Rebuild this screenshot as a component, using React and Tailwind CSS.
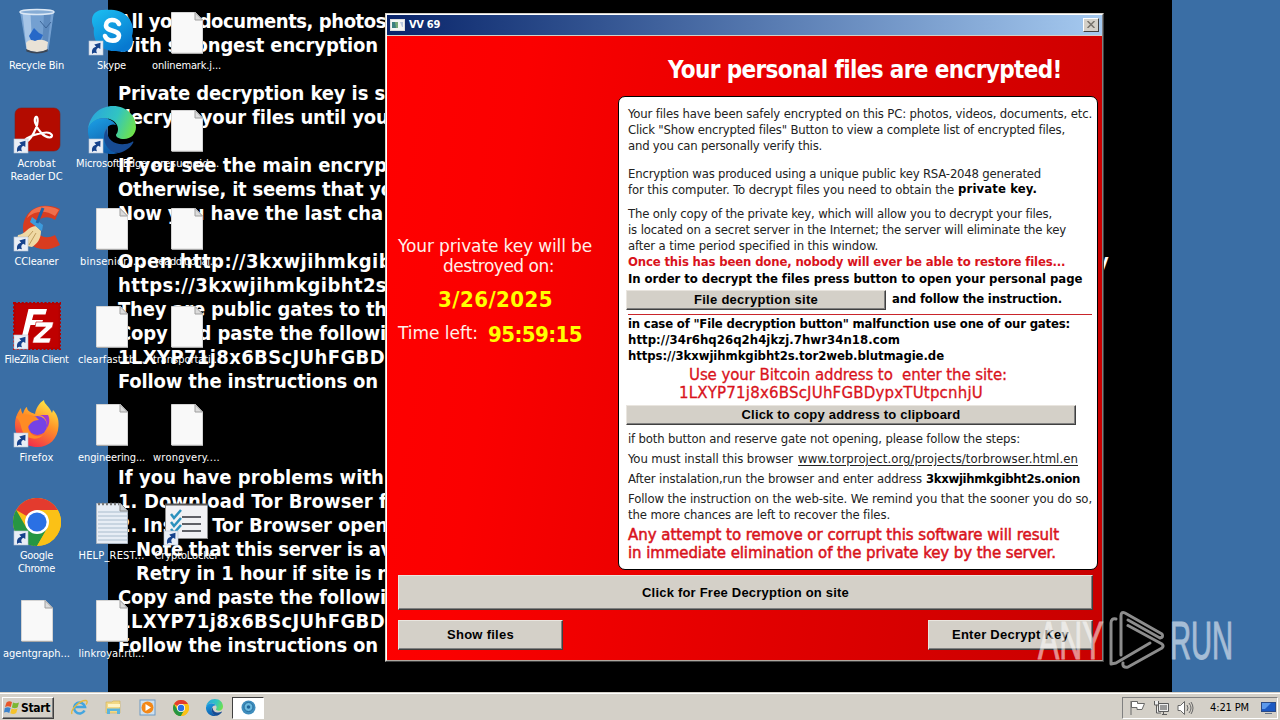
import React, { useLayoutEffect, useRef, useState } from "react";

const TAHOMA = "font-['DejaVu_Sans_Condensed','DejaVu_Sans','Noto_Sans',sans-serif] [font-stretch:condensed]";
const VERDANA = "font-['DejaVu_Sans',sans-serif] [font-stretch:normal]";
const ARIAL = "font-['Liberation_Sans',sans-serif]";

/* One line of text whose letter spacing is tuned to fill a width. */
function Fit({ w, children, className = "" }) {
  const ref = useRef(null);
  const [gap, setGap] = useState(0);
  useLayoutEffect(() => {
    const natural = ref.current.getBoundingClientRect().width;
    setGap((w - natural) / children.length);
  }, [w, children]);
  return (
    <span ref={ref} className={`inline-block whitespace-pre ${className}`} style={{ letterSpacing: gap }}>
      {children}
    </span>
  );
}

const wallpaper = [
  ["All your documents, photos", 268],
  ["with strongest encryption", 260],
  null,
  ["Private decryption key is s", 267],
  ["decrypt your files until you", 270],
  null,
  ["If you see the main encryp", 269],
  ["Otherwise, it seems that yo", 275],
  ["Now you have the last cha", 265],
  null,
  ["Open http://3kxwjihmkgib", 274],
  ["https://3kxwjihmkgibht2s", 269],
  ["They are public gates to th", 269],
  ["Copy and paste the followi", 268],
  ["1LXYP71j8x6BScJUhFGBD", 267],
  ["Follow the instructions on", 260],
  null,
  null,
  null,
  ["If you have problems with", 266],
  ["1. Download Tor Browser f", 269],
  ["2. Install Tor Browser open", 270],
  ["Note that this server is av", 256, true],
  ["Retry in 1 hour if site is n", 254, true],
  ["Copy and paste the followi", 268],
  ["1LXYP71j8x6BScJUhFGBD", 267],
  ["Follow the instructions on", 260],
];

function Shortcut({ x = 1, y = 33 }) {
  return (
    <g transform={`translate(${x} ${y})`}>
      <rect width="14" height="14" fill="#e9eef6" stroke="#b9c4d4" strokeWidth=".6" />
      <path d="M3.2 13c-1-4.500 1.300-7 4-7.300L5.300 3.500 11.500 1.800 11.300 8 9.300 6.800C7 8 6.800 10 8 12.300 6 11.500 4.500 11.500 3.200 13Z" fill="#17438c" />
    </g>
  );
}

function FileIcon() {
  return (
    <svg width="48" height="48" viewBox="0 0 48 48">
      <path d="M8.500 4.500h24l7 7.500v33H8.500Z" fill="#f9f9f9" stroke="#d4d4d4" />
      <path d="M32 4.500v7.500h7.500Z" fill="#dcdcdc" stroke="#9f9f9f" />
      <path d="M9 45.500h31" stroke="#a8a8a8" />
    </svg>
  );
}

function NoteIcon() {
  return (
    <svg width="48" height="48" viewBox="0 0 48 48">
      <path d="M8.500 5.500h24l7 7v33H8.500Z" fill="#e7edf5" stroke="#a9b3bf" />
      <path d="M10 14h29M10 18h29M10 22h29M10 26h29M10 30h29M10 34h29M10 38h29M10 42h29" stroke="#a9bccd" />
      <path d="M10 6h21" stroke="#777" strokeWidth="2.500" strokeDasharray="2 2" />
      <path d="M32 5v8h8Z" fill="#c8cdd2" stroke="#888" />
    </svg>
  );
}

function RecycleIcon() {
  return (
    <svg width="48" height="48" viewBox="0 0 48 48">
      <path d="M7 3.500h34L35.500 42q-11 5-22 0Z" fill="#7fa9d8" opacity=".85" />
      <path d="M9.500 6h8l2 36-6-1Z" fill="#b7d2ee" opacity=".75" />
      <path d="M31 6l7 0-4 35-5 1Z" fill="#5884b9" opacity=".8" />
      <path d="M16 28l5-8 5 5 4 2-3 6-8 1Z" fill="#2768c8" />
      <path d="M13 35q3-5 9-2 6-3 13 1l-1 8q-10 4-20 0Z" fill="#e9e2d6" />
      <path d="M13 41q11 6 22 0l-.5 2.500q-11 4-21 0Z" fill="#3c4654" />
      <ellipse cx="24" cy="4" rx="17" ry="2.500" fill="#86acd5" stroke="#dce8f5" strokeWidth="1.500" />
      <path d="M27 13l6 7 5-6" fill="none" stroke="#3d6699" />
    </svg>
  );
}

function AcrobatIcon() {
  return (
    <svg width="48" height="48" viewBox="0 0 48 48">
      <rect x="2" y="2" width="45" height="43" rx="6" fill="#b30b00" stroke="#852018" strokeWidth=".6" />
      <path d="M12 36C17 36 26 20 24.500 12.500 23.500 8.500 20.500 12 22.500 17.500 25 25 31 31 36.500 31.500 41 31 39 26.500 33.500 26.500 26 26.500 15 31 12.500 33.500 11 35.500 11.500 36 12 36Z" fill="none" stroke="#fff" strokeWidth="2.200" />
      <Shortcut />
    </svg>
  );
}

function CCleanerIcon() {
  return (
    <svg width="48" height="48" viewBox="0 0 48 48">
      <path d="M47 5C30-3 11 4 10 24c0 18 19 27 37 17l-5-10c-9 5-19 1-19-8 0-8 10-13 19-7Z" fill="#d83c20" />
      <path d="M46 6C33-1 18 2 14 14c8-8 19-8 28-2Z" fill="#ef6f4c" />
      <path d="M5 31c7 0 10-9 18-9l5 5c0 8-4 13-9 16L3 40Z" fill="#efd9a4" />
      <path d="M10 39l10-12M16 41l7-12" stroke="#bd9b5d" />
      <path d="M17 18l12 9 1-6-11-8Z" fill="#3d9bdc" />
      <path d="M24 19l6-15" stroke="#1e63a9" strokeWidth="3" />
      <Shortcut />
    </svg>
  );
}

function FileZillaIcon() {
  return (
    <svg width="48" height="48" viewBox="0 0 48 48">
      <rect x="1" y="1" width="46" height="46" fill="#b30000" stroke="#b30000" strokeWidth="2" strokeDasharray="2.200 1.600" />
      <rect x="2.500" y="2.500" width="43" height="43" fill="#bf0000" />
      <path d="M15.500 7H34l-1.500 5.500H20.500l-1.500 5.500h11l-1.500 5H17.500L14.500 34H9Z" fill="#fff" />
      <path d="M23 20h17.500l-1 5L27.500 36H38l-1.500 5H19.500l1-5L32.500 25H22Z" fill="#fff" stroke="#bf0000" strokeWidth=".6" />
      <Shortcut />
    </svg>
  );
}

function FirefoxIcon() {
  return (
    <svg width="48" height="48" viewBox="0 0 48 48">
      <defs>
        <linearGradient id="fx" x1=".8" y1="0" x2=".3" y2="1">
          <stop offset="0" stopColor="#fff04a" />
          <stop offset=".45" stopColor="#ff9428" />
          <stop offset="1" stopColor="#f0284d" />
        </linearGradient>
      </defs>
      <path d="M31 0c0 4 6 7 8 13l1-3c4 4 6 9 5.500 16C45 39 36 47 24.500 47 11 47 2 38 2 25c0-8 3-13 6-17 0 3 1 5 2 6 1-4 3-7 4-7 0 4 3 5 8 7 1-6 4-11 9-14Z" fill="url(#fx)" />
      <circle cx="24.500" cy="25.500" r="9.500" fill="#7542e5" />
      <path d="M3 17c6-5 16-2 20 0l3 3c-7 0-9 4-11 7 1 8 8 11 15 8-4 5-14 5-19-1C7 28 9 22 3 17Z" fill="#ff8b24" />
      <path d="M25 15c7 0 11 8 8 14 4-4 4-10 2-14Z" fill="#a13ad0" />
      <Shortcut />
    </svg>
  );
}

function ChromeMark({ size = 48, link = false }) {
  return (
    <svg width={size} height={size} viewBox="0 0 48 48">
      <circle cx="24" cy="24" r="24" fill="#fbc116" />
      <path d="M24 24 3.200 12A24 24 0 0 1 44.800 12H24Z" fill="#e33b2e" />
      <path d="M3.200 12 13.600 30 24 36 21 47.800A24 24 0 0 1 3.200 12Z" fill="#269643" />
      <path d="M13.600 30 24 36 34.400 30 24 48l-3-.2A24 24 0 0 1 8 42Z" fill="#269643" />
      <path d="M44.800 12A24 24 0 0 1 24 48L34.400 30 36 18 24 12Z" fill="#fbc116" />
      <circle cx="24" cy="24" r="12" fill="#fff" />
      <circle cx="24" cy="24" r="9.600" fill="#2b70e4" />
      {link && <Shortcut />}
    </svg>
  );
}

function EdgeMark({ size = 48, link = false, id }) {
  return (
    <svg width={size} height={size} viewBox="0 0 48 48">
      <defs>
        <linearGradient id={`${id}a`} x1="0" y1=".3" x2="1" y2=".6">
          <stop offset="0" stopColor="#2aa5dd" />
          <stop offset=".55" stopColor="#31c4c2" />
          <stop offset="1" stopColor="#6ee24c" />
        </linearGradient>
        <linearGradient id={`${id}b`} x1=".2" y1="0" x2=".6" y2="1">
          <stop offset="0" stopColor="#1b9de2" />
          <stop offset="1" stopColor="#0f5aa8" />
        </linearGradient>
      </defs>
      <path d="M0 23C2 9 12 0 25 0c14 0 23 10 23 21 0 7-5 12-12 12-5 0-8-2-8-4 0-1 2-2 2-6 0-6-6-11-14-11C9 12 3 16 0 23Z" fill={`url(#${id}a)`} />
      <path d="M0 23C4 10 22 9 28 19c-5-2-12 2-12 11 0 7 5 15 14 17-2 .8-4 1-6 1C10 48-1 37 0 23Z" fill={`url(#${id}b)`} />
      <path d="M19 23c-7 8-1 24 12 24 7-2 12-6 14-10 1-1 0-2-1-1-10 5-26 2-25-13Z" fill="#174b93" />
      {link && <Shortcut />}
    </svg>
  );
}

function SkypeIcon() {
  return (
    <svg width="48" height="48" viewBox="0 0 48 48">
      <defs>
        <linearGradient id="sk" x1="0" y1="0" x2=".6" y2="1">
          <stop offset="0" stopColor="#1cc0f2" />
          <stop offset="1" stopColor="#0779d0" />
        </linearGradient>
      </defs>
      <path d="M15 2C24 1 34 2 40 9c5 6 6 13 4 19 3 8-2 16-9 16-3 0-5-1-7-1C14 44 4 34 6 20 1 10 6 2 15 2Z" fill="url(#sk)" />
      <path d="M31 16C29 10.500 18 10.500 18 17.500c0 6.500 13 4 13 10.300C31 34.500 19 34 17 28" fill="none" stroke="#fff" strokeWidth="4.600" strokeLinecap="round" />
      <Shortcut />
    </svg>
  );
}

function LockerIcon() {
  return (
    <svg width="48" height="48" viewBox="0 0 48 48">
      <rect x="2.500" y="6.500" width="42" height="34" fill="#f1f1f4" stroke="#8a8a8a" />
      <path d="M2 6.500h43" stroke="#555" strokeWidth="2" />
      <path d="M19 19h19M19 26h19M19 33h19" stroke="#5f6066" strokeWidth="2" />
      <path d="m8 16 3 4 7-8M8 24l3 4 7-8M8 31l3 4 7-8" fill="none" stroke="#2b91bd" strokeWidth="2.500" />
      <Shortcut />
    </svg>
  );
}

const desktop = [
  [<RecycleIcon />, ["Recycle Bin", 55]],
  [<SkypeIcon />, ["Skype", 29]],
  [<FileIcon />, ["onlinemark.j...", 69]],
  [<AcrobatIcon />, ["Acrobat", 38], ["Reader DC", 52]],
  [<EdgeMark id="desk" size={48} link />, ["Microsoft Edge", 71]],
  [<FileIcon />, ["presumoid...", 66]],
  [<CCleanerIcon />, ["CCleaner", 44]],
  [<FileIcon />, ["binsenior.j...", 63]],
  [<FileIcon />, ["readditional...", 63]],
  [<FileZillaIcon />, ["FileZilla Client", 64]],
  [<FileIcon />, ["clearfast.tb...", 67]],
  [<FileIcon />, ["transportati...", 67]],
  [<FirefoxIcon />, ["Firefox", 34]],
  [<FileIcon />, ["engineering...", 67]],
  [<FileIcon />, ["wrongvery....", 67]],
  [<ChromeMark link />, ["Google", 33], ["Chrome", 37]],
  [<NoteIcon />, ["HELP_REST...", 66]],
  [<LockerIcon />, ["CryptoLocker", 64]],
  [<FileIcon />, ["agentgraph...", 67]],
  [<FileIcon />, ["linkroyal.rtf...", 66]],
];

function Button({ className = "", children, w }) {
  return (
    <button className={`flex shrink-0 items-center justify-center border border-t-[#e9e5df] border-l-[#e9e5df] border-b-[#404040] border-r-[#404040] bg-[#d4d0c8] text-[13px] font-bold text-black shadow-[inset_-1px_-1px_0_#808080] ${ARIAL} ${className}`}>
      <Fit w={w}>{children}</Fit>
    </button>
  );
}

function Row({ w, className = "", h = "h-4" }) {
  return (
    <div className={`flex items-center ${h} ${className}`}>
      <Fit w={w[1]}>{w[0]}</Fit>
    </div>
  );
}

function Panel() {
  return (
    <section className="ml-[231px] h-[475px] w-[480px] rounded-[7px] border border-black bg-white pt-[9px] pl-[9px] text-[13px] leading-4 text-[#222]">
      <Row w={["Your files have been safely encrypted on this PC: photos, videos, documents, etc.", 464]} />
      <Row w={['Click "Show encrypted files" Button to view a complete list of encrypted files,', 437]} />
      <Row w={["and you can personally verify this.", 194]} />
      <Row className="mt-3" w={["Encryption was produced using a unique public key RSA-2048 generated", 413]} />
      <div className="flex h-4 items-center gap-1">
        <Fit w={326}>for this computer. To decrypt files you need to obtain the</Fit>
        <Fit w={79} className="pb-px font-bold text-black">private key.</Fit>
      </div>
      <Row className="mt-2" w={["The only copy of the private key, which will allow you to decrypt your files,", 424]} />
      <Row w={["is located on a secret server in the Internet; the server will eliminate the key", 438]} />
      <Row w={["after a time period specified in this window.", 250]} />
      <Row className="font-bold text-[#d9131c]" w={["Once this has been done, nobody will ever be able to restore files...", 437]} />
      <Row h="h-[17px]" className="pt-px font-bold text-black" w={["In order to decrypt the files press button to open your personal page", 454]} />
      <div className="mt-[3px] -ml-[2px] flex h-5 items-center gap-[6px]">
        <Button className="h-5 w-[260px]" w={124}>File decryption site</Button>
        <Fit w={170} className="pb-[2px] font-bold text-black">and follow the instruction.</Fit>
      </div>
      <div className="mt-1 h-px w-[464px] bg-[#c9252b]" />
      <Row className="mt-px font-bold text-black" w={['in case of "File decryption button" malfunction use one of our gates:', 442]} />
      <Row className="font-bold text-black" w={["http://34r6hq26q2h4jkzj.7hwr34n18.com", 272]} />
      <Row className="font-bold text-black" w={["https://3kxwjihmkgibht2s.tor2web.blutmagie.de", 316]} />
      <div className={`mt-[2px] text-[15px] text-[#d9131c] [-webkit-text-stroke:0.3px_#d9131c] ${VERDANA}`}>
        <Row h="h-[18px]" className="pl-[61px]" w={["Use your Bitcoin address to  enter the site:", 318]} />
        <Row h="h-[18px]" className="pl-[51px]" w={["1LXYP71j8x6BScJUhFGBDypxTUtpcnhjU", 304]} />
      </div>
      <Button className="mt-[3px] -ml-[2px] h-5 w-[450px]" w={219}>Click to copy address to clipboard</Button>
      <Row h="h-5" className="mt-1" w={["if both button and reserve gate not opening, please follow the steps:", 392]} />
      <div className="flex h-5 items-center gap-[5px]">
        <Fit w={165}>You must install this browser</Fit>
        <Fit w={280} className="underline underline-offset-2">www.torproject.org/projects/torbrowser.html.en</Fit>
      </div>
      <div className="flex h-5 items-center gap-1">
        <Fit w={294}>After instalation,run the browser and enter address</Fit>
        <Fit w={154} className="font-bold text-black">3kxwjihmkgibht2s.onion</Fit>
      </div>
      <Row className="mt-[2px]" w={["Follow the instruction on the web-site. We remind you that the sooner you do so,", 464]} />
      <Row w={["the more chances are left to recover the files.", 262]} />
      <div className={`mt-[3px] text-[15px] text-[#d9131c] [-webkit-text-stroke:0.5px_#d9131c] ${VERDANA}`}>
        <Row h="h-[18px]" w={["Any attempt to remove or corrupt this software will result", 431]} />
        <Row h="h-[18px]" w={["in immediate elimination of the private key by the server.", 428]} />
      </div>
    </section>
  );
}

function LockerWindow() {
  return (
    <main className="absolute top-[13px] left-[385px] flex h-[649px] w-[719px] flex-col border border-t-[#d4d0c8] border-r-[#404040] border-b-[#404040] border-l-[#d4d0c8] bg-[#d4d0c8]">
      <div className="flex h-full flex-col border border-t-white border-r-[#808080] border-b-[#b0a8a0] border-l-white">
        <header className="flex h-[20px] shrink-0 items-center justify-between bg-linear-to-r from-[#0a246a] to-[#a6caf0] pr-[3px] pl-[3px]">
          <div className="flex items-center gap-1">
            <svg width="15" height="12" viewBox="0 0 15 12">
              <rect x=".5" y=".5" width="14" height="11" fill="#f5f5f5" stroke="#ddd" />
              <path d="M2 3h6v6H2Z" fill="#3d7f80" />
              <path d="M5 3h3v6H6Z" fill="#78a978" />
              <path d="M10 3h3v5h-1Z" fill="#bcc9df" />
            </svg>
            <Fit w={31} className="text-[11px] font-bold text-white">VV 69</Fit>
          </div>
          <div className="mt-[-1px] flex h-[14px] w-4 items-center justify-center border border-t-white border-r-[#404040] border-b-[#404040] border-l-white bg-[#d4d0c8]">
            <svg width="8" height="7" viewBox="0 0 8 7">
              <path d="m.5 0 7 7m0-7-7 7" stroke="#77736c" strokeWidth="1.500" />
            </svg>
          </div>
        </header>
        <div className="flex min-h-0 flex-1 flex-col border-t border-[#d4d0c8] bg-linear-[98deg,#ff0000_0%,#fb0000_18%,#e00000_60%,#c80000_100%]">
          <div className="relative flex h-[534px] shrink-0 flex-col">
            <h1 className="ml-[281px] flex h-[60px] items-center pt-[9px] text-[24px] leading-none font-bold text-white">
              <Fit w={393}>Your personal files are encrypted!</Fit>
            </h1>
            <Panel />
            <aside className={`absolute top-[201px] left-[11px] flex w-[200px] flex-col text-[17px] text-[#fff0ea] ${VERDANA}`}>
              <Row h="h-5" w={["Your private key will be", 194]} />
              <Row h="h-5" className="pl-[45px]" w={["destroyed on:", 111]} />
              <div className={TAHOMA}>
                <Row h="h-[34px]" className="mt-[5px] pl-[40px] text-[22px] font-bold text-[#ffff00]" w={["3/26/2025", 115]} />
              </div>
              <div className="flex h-9 items-center gap-[10px]">
                <Fit w={80}>Time left:</Fit>
                <Fit w={94} className={`text-[22px] font-bold text-[#ffff00] ${TAHOMA}`}>95:59:15</Fit>
              </div>
            </aside>
          </div>
          <div className="mt-[5px] flex flex-col gap-[10px] pl-[11px]">
            <Button className="h-[35px] w-[695px]" w={207}>Click for Free Decryption on site</Button>
            <div className="flex w-[695px] justify-between">
              <Button className="h-[30px] w-[165px]" w={67}>Show files</Button>
              <Button className="h-[30px] w-[165px]" w={117}>Enter Decrypt Key</Button>
            </div>
          </div>
        </div>
      </div>
    </main>
  );
}

function Watermark() {
  return (
    <div className="absolute top-[608px] left-[1038px] flex h-16 items-center text-white opacity-55">
      <div className="w-[70px]">
        <div className={`w-max origin-left scale-x-[0.59] text-[54px] leading-none [-webkit-text-stroke:1px_white] ${ARIAL}`}>ANY</div>
      </div>
      <svg width="58" height="64" viewBox="0 0 58 64" fill="none" stroke="currentColor" strokeWidth="3" strokeLinejoin="round" strokeLinecap="round">
        <path d="M13 47V8q0-5 4-3l37 21q2 3-2 4L20 12" />
        <path d="M8 11q-5-1-5 4v41l5-1 34-20" />
        <path d="M20 17.500 54 36q2 2 0 4L20 59q-6 1-5-4" />
      </svg>
      <div className="ml-[4px] w-[66px]">
        <div className={`w-max origin-left scale-x-[0.54] text-[54px] leading-none [-webkit-text-stroke:1px_white] ${ARIAL}`}>RUN</div>
      </div>
    </div>
  );
}

function Taskbar() {
  return (
    <footer className="absolute bottom-0 left-0 flex h-7 w-full items-center justify-between border-t border-[#d4d0c8] bg-[#d4d0c8] shadow-[inset_0_1px_0_#fff]">
      <div className="flex items-center pt-[2px] pl-[2px]">
        <button className="flex h-[22px] w-[52px] items-center gap-px border border-t-white border-r-[#404040] border-b-[#404040] border-l-white pl-px shadow-[inset_-1px_-1px_0_#808080]">
          <svg width="16" height="15" viewBox="0 0 16 15">
            <path d="M2.500 2.500Q5 .5 8 2L6.800 7Q4 5.500 1 7Z" fill="#e8562a" />
            <path d="M9 2.500q3 1.500 6 0L13.700 7.300Q11 9 7.900 7.500Z" fill="#7cb733" />
            <path d="M.8 8q3-1.500 5.800 0L5.300 13Q2.500 11.300 0 12.500Z" fill="#3d83cc" />
            <path d="M7.600 8.500q3 1.500 6 0L12.200 13Q9.500 15 6.300 13.300Z" fill="#f5c22b" />
          </svg>
          <Fit w={29} className="text-[12px] font-bold text-black">Start</Fit>
        </button>
        <div className="ml-[17px] flex items-center gap-[17px]">
          <svg width="17" height="17" viewBox="0 0 17 17">
            <path d="M13.500 11.500A5.500 5.500 0 1 1 14 8H4" fill="none" stroke="#43a5df" strokeWidth="2.600" />
            <path d="M1 15C-1 11 9 1 15 1.500c2 .5 1 3 0 4" fill="none" stroke="#e6b93c" strokeWidth="1.300" />
          </svg>
          <svg width="17" height="17" viewBox="0 0 17 17">
            <path d="M1 3h6l1-1h7v12H1Z" fill="#f2d885" stroke="#cfae55" strokeWidth=".6" />
            <path d="M3 5h12v3H3Z" fill="#fff4c6" />
            <path d="M2 15V9.500h13V15h-3v-3H5v3Z" fill="#5cb4dc" />
          </svg>
          <svg width="17" height="17" viewBox="0 0 17 17">
            <rect x="1" y="1" width="15" height="15" fill="#cfe0ee" stroke="#6c9ac4" />
            <circle cx="8.500" cy="8.500" r="6" fill="#f38818" />
            <path d="M6.500 5v7l5.500-3.500Z" fill="#fff" />
          </svg>
          <ChromeMark size={16} />
          <EdgeMark id="bar" size={17} />
        </div>
        <div className="ml-[9px] flex h-[22px] w-8 items-center justify-center border border-t-[#404040] border-r-white border-b-white border-l-[#404040] bg-white">
          <svg width="15" height="15" viewBox="0 0 15 15">
            <circle cx="7.500" cy="7.500" r="7" fill="#3f8dbd" />
            <circle cx="7.500" cy="7" r="4.500" fill="#6bb9de" stroke="#236a9b" />
            <circle cx="7.500" cy="7" r="1.800" fill="#1e649a" />
          </svg>
        </div>
      </div>
      <div className="mt-[3px] mr-[2px] flex h-[22px] w-[156px] items-center border border-t-[#808080] border-r-white border-b-white border-l-[#808080] pl-[6px]">
        <svg width="17" height="16" viewBox="0 0 17 16" fill="#fff" stroke="#686868">
          <path d="M2 15V1M2.500 1.500h6v2h7L13 9.500H8v-2H2.500Z" />
        </svg>
        <svg className="ml-[7px]" width="17" height="16" viewBox="0 0 17 16" fill="#eee" stroke="#5c5c5c">
          <path d="M5.500 3.500h10v8h-10ZM9 14.500h5M10.500 12v2M1.500 1v4h4V1M3.500 5v8H8" />
          <path d="M7 5h7v5H7Z" fill="#999" stroke="none" />
        </svg>
        <svg className="ml-[7px]" width="17" height="16" viewBox="0 0 17 16" fill="#fff" stroke="#666">
          <path d="M1 5.500h2.500l4-4v13l-4-4H1Z" />
          <path d="M10 5q2 3 0 6M12 3q4 5 0 10M14 2q4 6 0 12" fill="none" />
        </svg>
        <Fit w={39} className="ml-4 text-[11px] text-black">4:21 PM</Fit>
        <svg className="ml-3" width="15" height="14" viewBox="0 0 15 14">
          <rect x=".5" y="1.500" width="14" height="9" fill="#1c59c2" stroke="#2a4a86" />
          <path d="M1 2h9L4 8H1Z" fill="#5c99eb" />
          <path d="M4 12.500h7" stroke="#65758b" />
        </svg>
      </div>
    </footer>
  );
}

export default function App() {
  return (
    <div className={`relative h-[720px] w-[1280px] overflow-hidden bg-[#3a6ea5] ${TAHOMA}`}>
      <div className="mx-[108px] h-[692px] overflow-hidden bg-black pt-[9px] pl-[10px] text-[20px] leading-6 font-bold text-white">
        {wallpaper.map((line, i) => (
          <div key={i} className={`flex h-6 ${line && line[2] ? "pl-[18px]" : ""}`}>
            {line && <Fit w={line[1]}>{line[0]}</Fit>}
            {i === 0 && <Fit w={720}>, databases and other important files have been encrypted</Fit>}
            {i === 10 && <Fit w={12} className="ml-[705px]">y</Fit>}
          </div>
        ))}
      </div>
      <div className="absolute top-[8px] left-[-1px] grid auto-rows-[98px] grid-cols-[75px_75px_75px]">
        {desktop.map(([icon, ...labels], i) => (
          <div key={i} className="flex flex-col items-center text-[11px] leading-[13px] text-white">
            {icon}
            <div className="mt-[3px] flex flex-col items-center">
              {labels.map(([t, w]) => (
                <Fit key={t} w={w}>{t}</Fit>
              ))}
            </div>
          </div>
        ))}
      </div>
      <LockerWindow />
      <Watermark />
      <Taskbar />
    </div>
  );
}
